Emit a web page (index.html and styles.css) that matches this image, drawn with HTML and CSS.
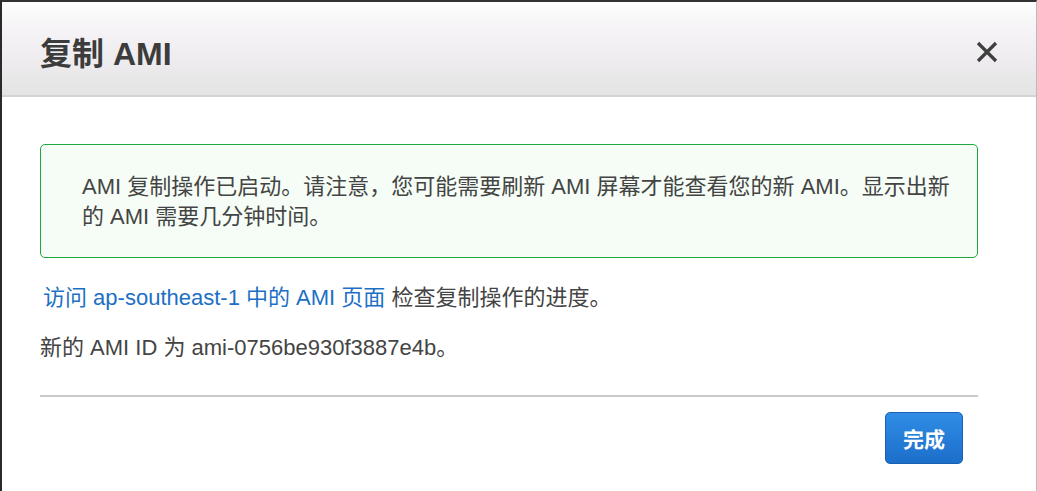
FILE: index.html
```html
<!DOCTYPE html>
<html lang="zh-CN">
<head>
    <meta charset="UTF-8">
    <meta name="viewport" content="width=device-width, initial-scale=1.0">
    <title>复制 AMI</title>
    <link rel="stylesheet" href="styles.css">
</head>
<body>
    <div class="dialog">
        <div class="dialog-header">
            <h1>复制 AMI</h1>
            <button class="close" aria-label="关闭">
                <svg width="22" height="22" viewBox="0 0 22 22">
                    <path d="M2 2 L20 20 M20 2 L2 20" stroke="#3f3f3f" stroke-width="3.2" fill="none"/>
                </svg>
            </button>
        </div>

        <div class="dialog-body">
            <div class="notice">
                AMI 复制操作已启动。请注意，您可能需要刷新 AMI 屏幕才能查看您的新 AMI。显示出新的 AMI 需要几分钟时间。
            </div>

            <p class="line"><a href="#">访问 ap-southeast-1 中的 AMI 页面</a> 检查复制操作的进度。</p>
            <p class="line">新的 AMI ID 为 ami-0756be930f3887e4b。</p>
        </div>

        <div class="dialog-footer">
            <button class="done">完成</button>
        </div>
    </div>
</body>
</html>
```

FILE: styles.css
```css
html, body {
    margin: 0;
    height: 100%;
    background: #fff;
}
body {
    font-family: "Liberation Sans", "Noto Sans CJK SC", sans-serif;
    color: #444;
}
.dialog {
    height: 100%;
    box-sizing: border-box;
    border-top: 2px solid #333;
    border-left: 2px solid #2a2a2a;
    border-right: 1px solid #bbb;
}
.dialog-header {
    height: 93px;
    display: flex;
    align-items: center;
    justify-content: space-between;
    padding: 0 38px 0 38px;
    background: linear-gradient(to bottom, #fefefe 0%, #f5f3f5 30%, #eceaec 70%, #e4e4e4 100%);
    border-bottom: 2px solid #d4d2d4;
}
.dialog-header h1 {
    margin: 4px 0 0 0;
    font-size: 32px;
    font-weight: bold;
    color: #3c3c3c;
}
.close {
    background: none;
    border: none;
    padding: 0;
    margin-top: 6px;
    display: flex;
    cursor: pointer;
}
.dialog-body {
    padding: 47px 58px 0 38px;
    font-size: 22px;
}
.notice {
    border: 1px solid #1fa83e;
    border-radius: 5px;
    background: #f5fdf6;
    padding: 27px 18px 25px 41px;
    line-height: 30px;
    color: #444;
}
.line {
    margin: 0;
    padding-left: 3px;
    line-height: 30px;
}
.notice + .line {
    margin-top: 25px;
}
.line + .line {
    margin-top: 20px;
    padding-left: 0;
}
.line a {
    color: #1c6fc4;
    text-decoration: none;
}
.dialog-footer {
    margin: 32px 58px 0 38px;
    border-top: 2px solid #cacaca;
    display: flex;
    justify-content: flex-end;
    padding: 15px 15px 0 0;
}
.done {
    width: 78px;
    height: 52px;
    font-family: "Liberation Sans", "Noto Sans CJK SC", sans-serif;
    font-size: 21px;
    font-weight: bold;
    color: #fff;
    background: linear-gradient(to bottom, #2f8ce4 0%, #1c6fcb 100%);
    border: 1px solid #1a5fb0;
    border-radius: 5px;
    cursor: pointer;
}
```
